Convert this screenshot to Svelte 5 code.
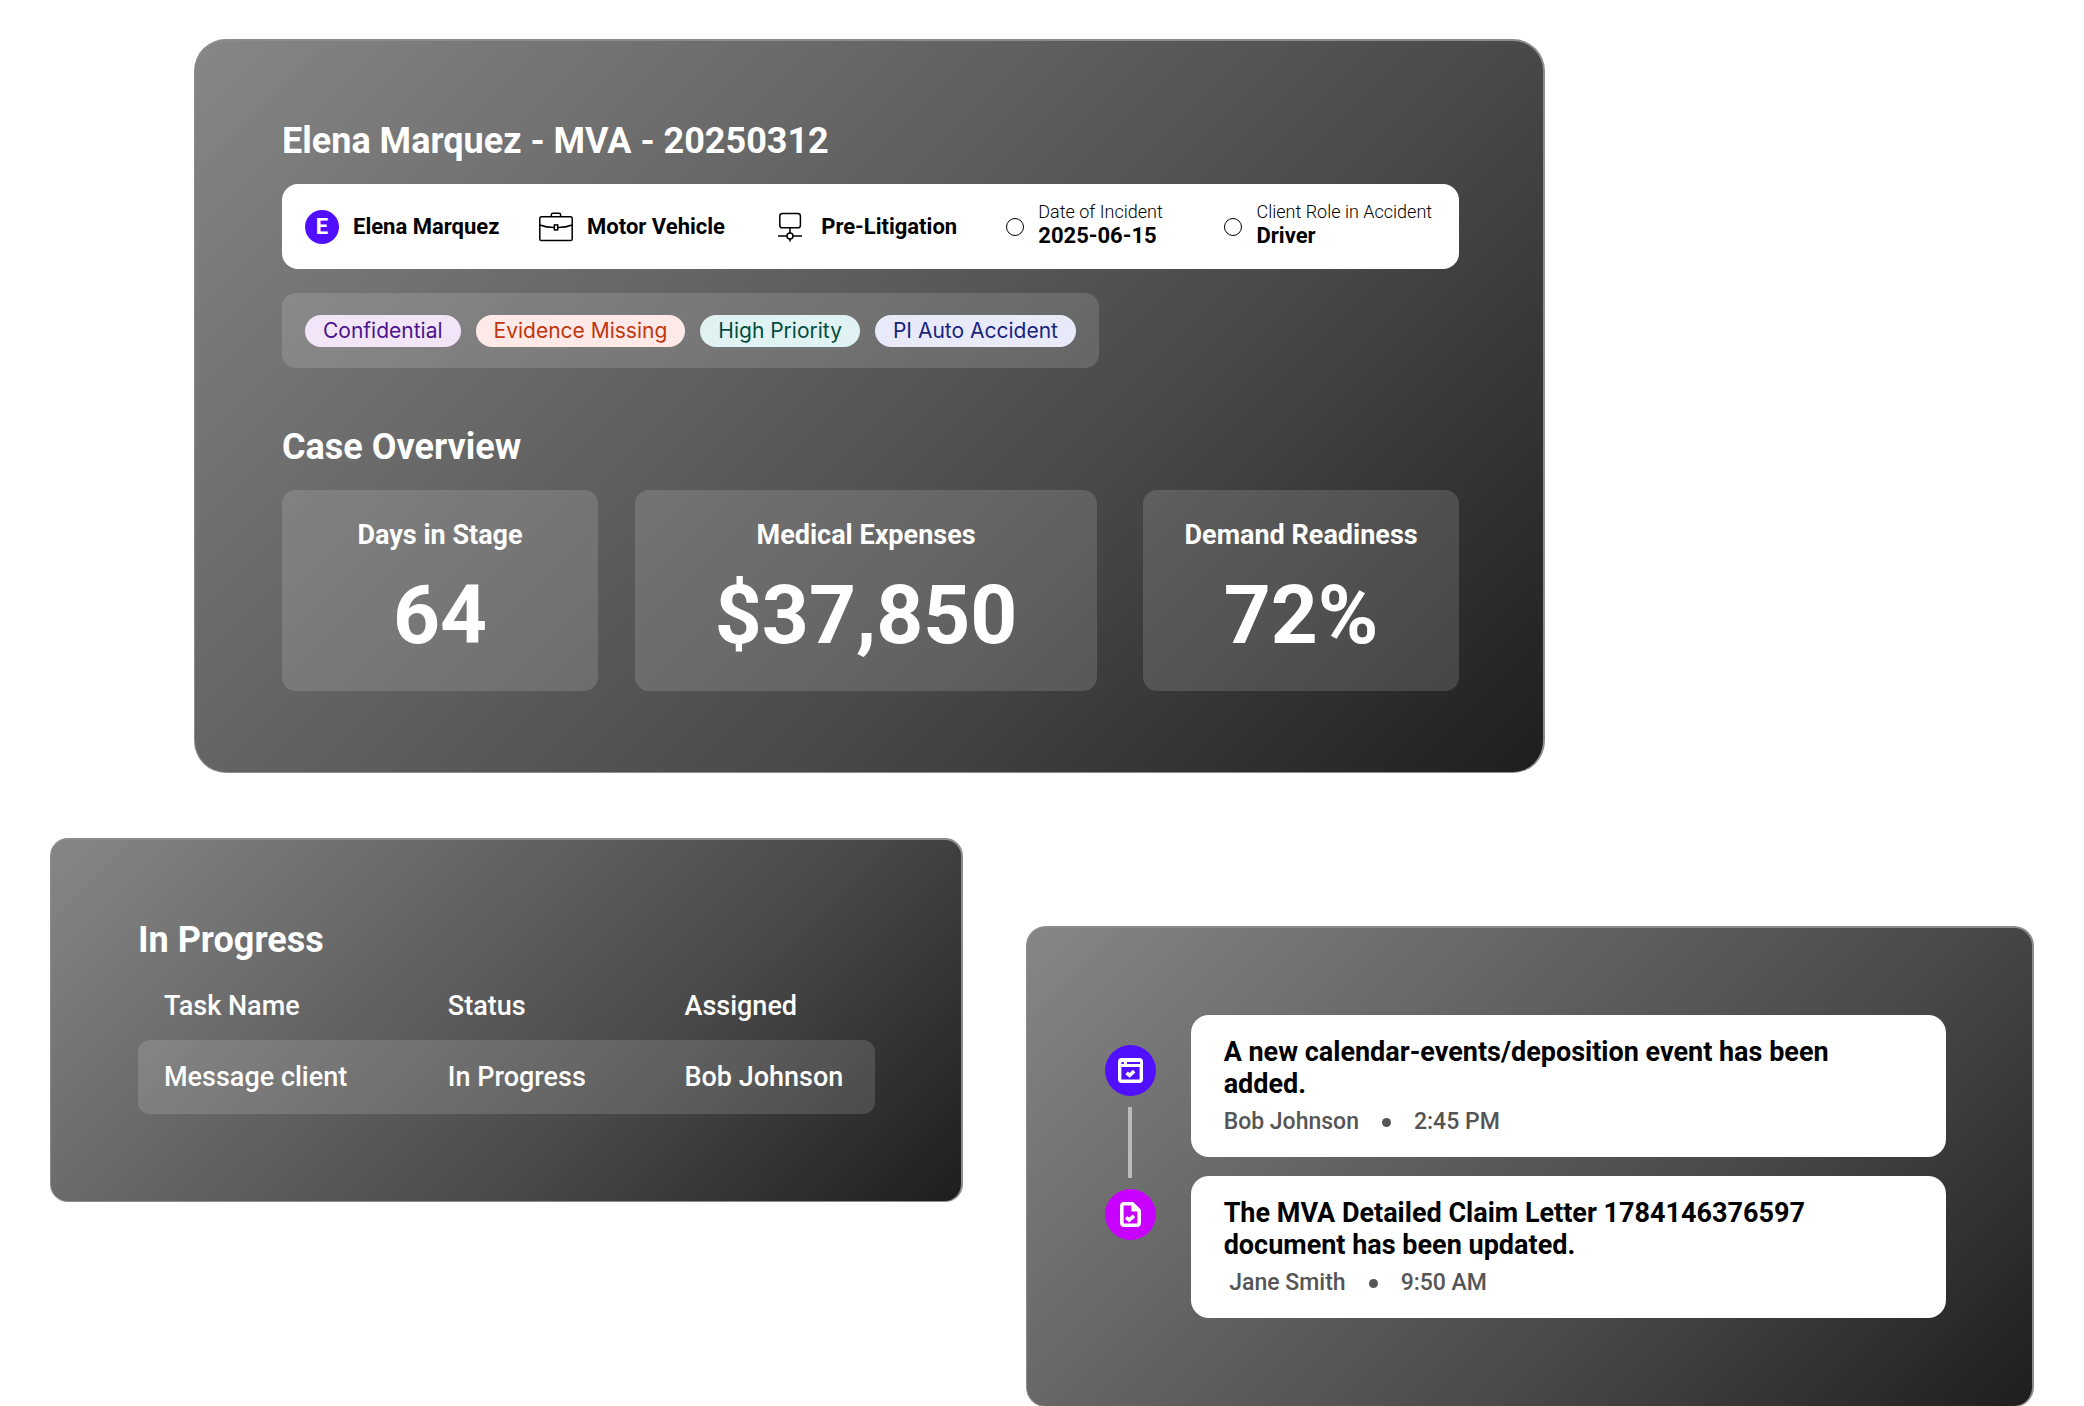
<script>
	const client = { initial: 'E', name: 'Elena Marquez' };

	const facts = [
		{ label: 'Date of Incident', value: '2025-06-15' },
		{ label: 'Client Role in Accident', value: 'Driver' }
	];

	const tags = [
		{ text: 'Confidential', tone: 'purple' },
		{ text: 'Evidence Missing', tone: 'orange' },
		{ text: 'High Priority', tone: 'teal' },
		{ text: 'PI Auto Accident', tone: 'indigo' }
	];

	const stats = [
		{ label: 'Days in Stage', value: '64' },
		{ label: 'Medical Expenses', value: '$37,850' },
		{ label: 'Demand Readiness', value: '72%' }
	];

	const tasks = [{ name: 'Message client', status: 'In Progress', assigned: 'Bob Johnson' }];

	const events = [
		{
			title: 'A new calendar-events/deposition event has been added.',
			author: 'Bob Johnson',
			time: '2:45 PM'
		},
		{
			title: 'The MVA Detailed Claim Letter 1784146376597 document has been updated.',
			author: ' Jane Smith',
			time: '9:50 AM'
		}
	];
</script>

<main class="board">
	<section class="panel case">
		<h1>Elena Marquez - MVA - 20250312</h1>

		<div class="summary">
			<div class="item">
				<span class="avatar">{client.initial}</span>
				<strong>{client.name}</strong>
			</div>
			<div class="item">
				<span class="icon">
					<svg width="34" height="30" viewBox="0 0 34 30" fill="none" stroke="#000" stroke-width="1.5">
						<rect x="0.8" y="4.7" width="32.4" height="23.8" rx="1.6" />
						<path d="M12.3 4.7V2.8Q12.3 1.2 13.9 1.2H20Q21.6 1.2 21.6 2.8V4.7" />
						<path d="M0.8 13Q7 15.4 15.2 15.6M18.8 15.6Q27 15.4 33.2 13" />
						<rect x="15.4" y="12.9" width="3.3" height="5" />
					</svg>
				</span>
				<strong>Motor Vehicle</strong>
			</div>
			<div class="item">
				<span class="icon">
					<svg width="24" height="30" viewBox="0 0 24 30" fill="none" stroke="#000" stroke-width="1.5">
						<rect x="1.8" y="1.4" width="20.6" height="14.4" rx="2.6" />
						<path d="M12 15.8V21M0 24H9M15 24H24M12 27V29.4" />
						<circle cx="12" cy="24" r="3" />
					</svg>
				</span>
				<strong>Pre-Litigation</strong>
			</div>
			{#each facts as fact}
				<div class="item">
					<span class="ring"></span>
					<div class="fact">
						<small>{fact.label}</small>
						<strong>{fact.value}</strong>
					</div>
				</div>
			{/each}
		</div>

		<div class="tags">
			{#each tags as tag}
				<span class="tag {tag.tone}">{tag.text}</span>
			{/each}
		</div>

		<h2>Case Overview</h2>
		<div class="stats">
			{#each stats as stat}
				<div class="stat">
					<div class="stat-label">{stat.label}</div>
					<div class="stat-value">{stat.value}</div>
				</div>
			{/each}
		</div>
	</section>

	<div class="lower">
		<section class="panel tasks">
			<h2>In Progress</h2>
			<table>
				<thead>
					<tr>
						<th class="col-name">Task Name</th>
						<th class="col-status">Status</th>
						<th>Assigned</th>
					</tr>
				</thead>
				<tbody>
					{#each tasks as task}
						<tr>
							<td>{task.name}</td>
							<td>{task.status}</td>
							<td>{task.assigned}</td>
						</tr>
					{/each}
				</tbody>
			</table>
		</section>

		<section class="panel activity">
			<div class="rail">
				<span class="dot blue">
					<svg width="25" height="25" viewBox="0 0 25 25">
						<rect x="1.7" y="1.7" width="21.6" height="21.6" rx="2" fill="none" stroke="#fff" stroke-width="3.4" />
						<path d="M2 3H23V9H2Z" fill="#fff" />
						<path d="M3.4 5H5.8M9 5H22" stroke="#510fff" stroke-width="1.8" />
						<path d="M8.6 14.8L11.6 17.4L16.2 13.2" fill="none" stroke="#fff" stroke-width="3.6" />
					</svg>
				</span>
				<span class="line"></span>
				<span class="dot pink">
					<svg width="21" height="25" viewBox="0 0 21 25">
						<path d="M12.4 1.8H4.2Q1.8 1.8 1.8 4.2V20.8Q1.8 23.2 4.2 23.2H16.8Q19.2 23.2 19.2 20.8V8.6Z" fill="none" stroke="#fff" stroke-width="3.6" stroke-linejoin="round" />
						<path d="M11.4 1.6V9.4H19.6Z" fill="#fff" />
						<path d="M6.2 15.4L9.2 18L14 13.8" fill="none" stroke="#fff" stroke-width="3.6" />
					</svg>
				</span>
			</div>
			<div class="feed">
				{#each events as event}
					<article>
						<h3>{event.title}</h3>
						<p>
							<span class="author">{event.author}</span>
							<i></i>
							<time>{event.time}</time>
						</p>
					</article>
				{/each}
			</div>
		</section>
	</div>
</main>

<style>
	:global(body) {
		margin: 0;
		background: #fff;
	}

	.board {
		padding: 39px 50px 30px;
		font-family: Roboto, sans-serif;
		color: #fff;
	}

	.panel {
		box-sizing: border-box;
		background: linear-gradient(135deg, #868686, #484848 65%, #1e1e1e);
		border: solid #8c8c8c;
		border-width: 2px 2px 1px 1px;
	}

	h1,
	h2,
	h3,
	p {
		margin: 0;
	}

	h1,
	h2 {
		font-size: 36px;
		line-height: 44px;
		font-weight: 700;
	}

	.case {
		width: 68.1%;
		margin-left: 144px;
		padding: 78px 84px 81px 87px;
		border-radius: 32px;
	}

	.summary {
		display: grid;
		grid-template-columns: 235fr 235fr 234fr 219fr 204fr;
		align-items: center;
		box-sizing: border-box;
		min-height: 85px;
		margin-top: 21px;
		padding: 0 27px 0 23px;
		border-radius: 16px;
		background: #fff;
		color: #000;
		white-space: nowrap;
	}

	.item {
		display: flex;
		align-items: center;
		gap: 14px;
	}

	.item strong {
		display: block;
		font-size: 22px;
		line-height: 24px;
		font-weight: 700;
	}

	.item small {
		display: block;
		font-size: 18px;
		line-height: 24px;
		font-weight: 300;
	}

	.fact {
		padding-bottom: 5px;
	}

	.avatar {
		width: 34px;
		height: 34px;
		border-radius: 50%;
		background: #510fff;
		color: #fff;
		font-size: 22px;
		line-height: 34px;
		font-weight: 700;
		text-align: center;
	}

	.icon {
		display: flex;
		justify-content: center;
		width: 34px;
	}

	.ring {
		box-sizing: border-box;
		width: 18px;
		height: 18px;
		border: 1px solid #000;
		border-radius: 50%;
	}

	.tags {
		display: flex;
		gap: 15px;
		width: fit-content;
		margin-top: 24px;
		padding: 22px 23px 21px;
		border-radius: 14px;
		background: rgba(255, 255, 255, 0.14);
	}

	.tag {
		padding: 0 18px;
		border-radius: 16px;
		font-family: Inter, sans-serif;
		font-size: 21px;
		line-height: 32px;
	}

	.purple {
		background: #f3e5f8;
		color: #4a148c;
	}

	.orange {
		background: #fde9e7;
		color: #bf360c;
	}

	.teal {
		background: #e0f2f1;
		color: #004d40;
	}

	.indigo {
		background: #e8eaf9;
		color: #1a237e;
	}

	.case h2 {
		margin-top: 57px;
	}

	.stats {
		display: flex;
		margin-top: 21px;
	}

	.stat {
		flex: 316;
		padding: 29px 0 28px;
		border-radius: 14px;
		background: rgba(255, 255, 255, 0.14);
		text-align: center;
		font-weight: 700;
	}

	.stat:nth-child(2) {
		flex-grow: 462;
		margin: 0 46px 0 37px;
	}

	.stat-label {
		font-size: 27px;
		line-height: 32px;
	}

	.stat-value {
		margin-top: 16px;
		font-size: 82px;
		line-height: 96px;
	}

	.lower {
		display: flex;
		align-items: flex-start;
		gap: 63px;
		margin-top: 65px;
	}

	.tasks {
		width: 46%;
		flex: none;
		padding: 78px 86px 87px 87px;
		border-radius: 18px;
	}

	table {
		width: 100%;
		margin-top: 13px;
		table-layout: fixed;
		border-spacing: 0;
		font-size: 27px;
		line-height: 32px;
	}

	th,
	td {
		padding: 21px 0 21px 26px;
		font-weight: 500;
		text-align: left;
	}

	th {
		padding-top: 15px;
		padding-bottom: 18px;
	}

	.col-name {
		width: 35%;
	}

	.col-status {
		width: 28.6%;
	}

	td {
		background: rgba(255, 255, 255, 0.14);
	}

	td:first-child {
		border-radius: 12px 0 0 12px;
	}

	td:last-child {
		border-radius: 0 12px 12px 0;
	}

	.activity {
		display: flex;
		gap: 35px;
		flex: 1;
		margin-top: 88px;
		padding: 87px 86px 88px 78px;
		border-radius: 20px;
	}

	.rail {
		display: flex;
		flex-direction: column;
		align-items: center;
		gap: 11px;
		padding-top: 30px;
	}

	.dot {
		display: flex;
		align-items: center;
		justify-content: center;
		width: 51px;
		height: 51px;
		border-radius: 50%;
	}

	.blue {
		background: #510fff;
	}

	.pink {
		background: #c800ff;
	}

	.line {
		width: 4px;
		height: 71px;
		background: #bbb;
	}

	.feed {
		display: flex;
		flex: 1;
		flex-direction: column;
		gap: 19px;
	}

	article {
		padding: 21px 33px 19px;
		border-radius: 18px;
		background: #fff;
		color: #000;
	}

	h3 {
		font-size: 27px;
		line-height: 32px;
		font-weight: 700;
	}

	p {
		display: flex;
		align-items: center;
		gap: 23px;
		margin-top: 6px;
		color: #555;
		font-size: 23px;
		line-height: 32px;
		font-weight: 500;
	}

	.author {
		white-space: pre;
	}

	p i {
		width: 9px;
		height: 9px;
		border-radius: 50%;
		background: #555;
	}
</style>
